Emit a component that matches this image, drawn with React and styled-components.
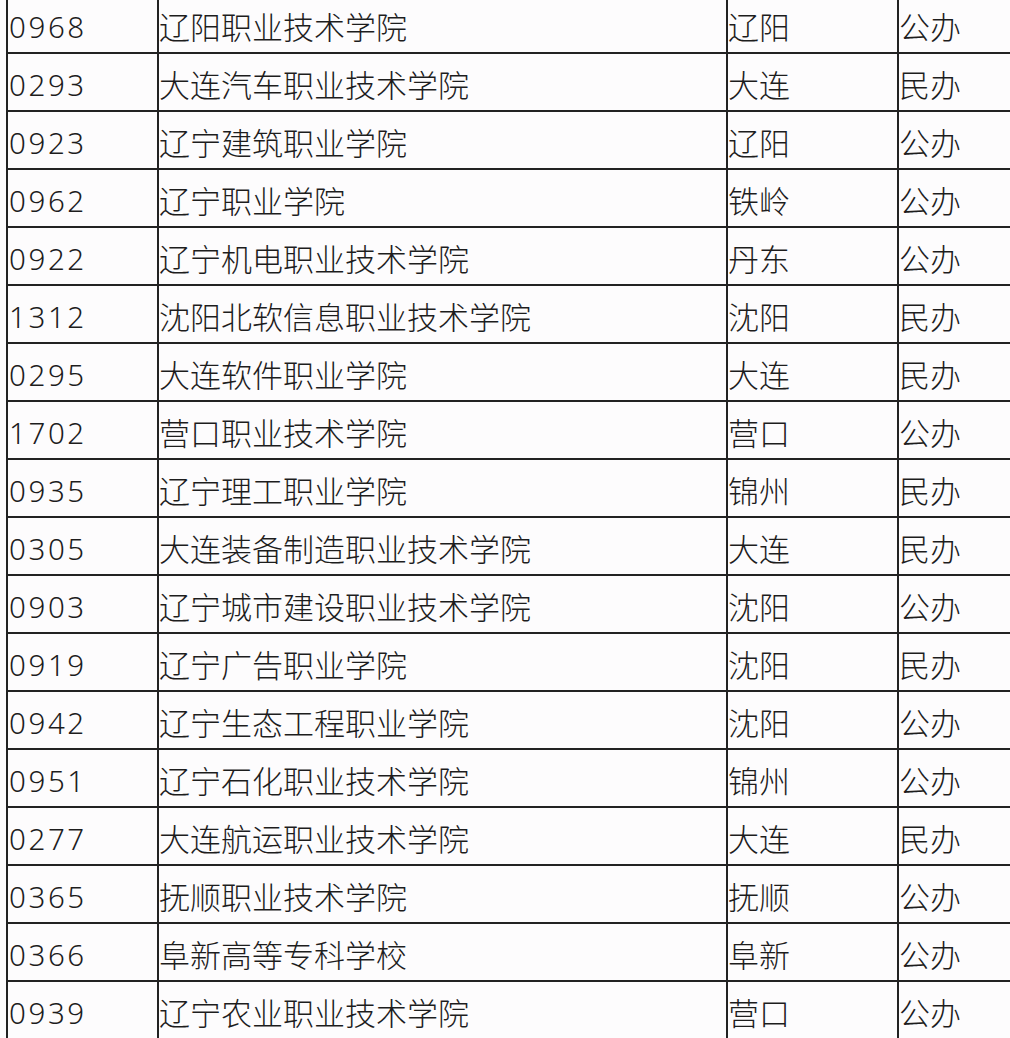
import React from "react";
import styled, { createGlobalStyle } from "styled-components";

const Global = createGlobalStyle`
  html, body { margin: 0; padding: 0; background: #fdfcfd; }
  body { overflow: hidden; }
`;

const Page = styled.div`
  width: 1010px;
  height: 1038px;
  overflow: hidden;
  background: #fdfcfd;
`;

const Table = styled.div`
  margin-top: -4px;
  margin-left: 6px;
  display: grid;
  grid-template-columns: 151px 569px 171px 113px;
  grid-auto-rows: 58px;
  font-family: "Noto Sans CJK SC", "Noto Sans", sans-serif;
  color: #1d1d1d;
`;

const Cell = styled.div`
  box-sizing: border-box;
  border-left: 2px solid #222;
  border-bottom: 2px solid #222;
  display: flex;
  align-items: center;
  padding-top: 2px;
  font-size: 31px;
  font-weight: 300;
  white-space: nowrap;
  overflow: hidden;
`;

const Code = styled(Cell)`
  font-family: "Noto Sans", "Noto Sans CJK SC", sans-serif;
  font-size: 29.5px;
  letter-spacing: 2.6px;
  padding-left: 1px;
  padding-top: 5px;
`;

const rows = [
  ["0968", "辽阳职业技术学院", "辽阳", "公办"],
  ["0293", "大连汽车职业技术学院", "大连", "民办"],
  ["0923", "辽宁建筑职业学院", "辽阳", "公办"],
  ["0962", "辽宁职业学院", "铁岭", "公办"],
  ["0922", "辽宁机电职业技术学院", "丹东", "公办"],
  ["1312", "沈阳北软信息职业技术学院", "沈阳", "民办"],
  ["0295", "大连软件职业学院", "大连", "民办"],
  ["1702", "营口职业技术学院", "营口", "公办"],
  ["0935", "辽宁理工职业学院", "锦州", "民办"],
  ["0305", "大连装备制造职业技术学院", "大连", "民办"],
  ["0903", "辽宁城市建设职业技术学院", "沈阳", "公办"],
  ["0919", "辽宁广告职业学院", "沈阳", "民办"],
  ["0942", "辽宁生态工程职业学院", "沈阳", "公办"],
  ["0951", "辽宁石化职业技术学院", "锦州", "公办"],
  ["0277", "大连航运职业技术学院", "大连", "民办"],
  ["0365", "抚顺职业技术学院", "抚顺", "公办"],
  ["0366", "阜新高等专科学校", "阜新", "公办"],
  ["0939", "辽宁农业职业技术学院", "营口", "公办"],
];

export default function App() {
  return (
    <Page>
      <Global />
      <Table>
        {rows.map((r) => (
          <React.Fragment key={r[0]}>
            <Code>{r[0]}</Code>
            <Cell>{r[1]}</Cell>
            <Cell>{r[2]}</Cell>
            <Cell>{r[3]}</Cell>
          </React.Fragment>
        ))}
      </Table>
    </Page>
  );
}
